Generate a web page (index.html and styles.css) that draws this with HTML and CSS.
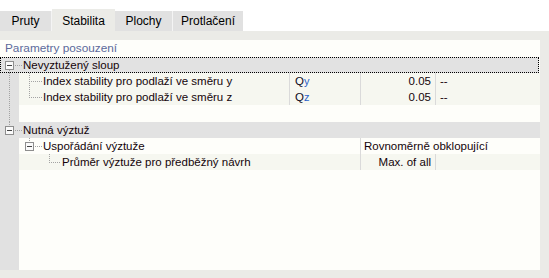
FILE: index.html
```html
<!DOCTYPE html>
<html>
<head>
<meta charset="utf-8">
<link rel="stylesheet" href="styles.css">
</head>
<body>
<div class="tabs">
  <div class="tab t1">Pruty</div>
  <div class="tab t2 active">Stabilita</div>
  <div class="tab t3">Plochy</div>
  <div class="tab t4">Protlačení</div>
</div>
<div class="panel">
  <div class="sheet">
    <div class="title">Parametry posouzení</div>
    <div class="tree">
      <div class="row cat focus">
        <span class="tw tw-first"><span class="exp"></span></span>
        <span class="label">Nevyztužený sloup</span>
      </div>
      <div class="row leaf">
        <span class="gut vl9"></span>
        <span class="cell name"><span class="ind ind-mid"></span><span class="label">Index stability pro podlaží ve směru y</span></span>
        <span class="cell sym">Q<sub>y</sub></span>
        <span class="cell val">0.05</span>
        <span class="cell unit">--</span>
      </div>
      <div class="row leaf">
        <span class="gut vl9"></span>
        <span class="cell name"><span class="ind ind-last"></span><span class="label">Index stability pro podlaží ve směru z</span></span>
        <span class="cell sym">Q<sub>z</sub></span>
        <span class="cell val">0.05</span>
        <span class="cell unit">--</span>
      </div>
      <div class="row blank">
        <span class="gut vl9"></span>
      </div>
      <div class="row cat">
        <span class="tw tw-last"><span class="exp"></span></span>
        <span class="label">Nutná výztuž</span>
      </div>
      <div class="row sub">
        <span class="gut"></span>
        <span class="cell name wide-name"><span class="ind2"><span class="exp"></span></span><span class="label">Uspořádání výztuže</span></span>
        <span class="cell wide">Rovnoměrně obklopující</span>
      </div>
      <div class="row leaf">
        <span class="gut"></span>
        <span class="cell name wide-name"><span class="ind3"></span><span class="label">Průměr výztuže pro předběžný návrh</span></span>
        <span class="cell val">Max. of all</span>
        <span class="cell unit"></span>
      </div>
    </div>
  </div>
</div>
</body>
</html>
```
FILE: styles.css
```css
* { box-sizing: border-box; }
html, body { margin: 0; padding: 0; }
body {
  width: 549px;
  height: 278px;
  background: #ffffff;
  font-family: "Liberation Sans", Arial, sans-serif;
  font-size: 11.5px;
  color: #14040a;
  overflow: hidden;
  display: flex;
  flex-direction: column;
}
.tabs {
  height: 31px;
  display: flex;
  align-items: flex-end;
}
.tab {
  height: 20px;
  line-height: 20px;
  background: #e1e1e1;
  color: #000;
  font-size: 12px;
  text-align: center;
  border-right: 1px solid #f4f4f4;
}
.tab.active {
  height: 22px;
  line-height: 24px;
  background: #ebebe7;
  border-right: none;
}
.t1 { width: 52px; }
.t2 { width: 63px; }
.t3 { width: 58px; }
.t4 { width: 70px; border-right: none; }

.panel {
  flex: 1;
  background: #ebebe7;
  padding: 9px 9px 8px 0;
  display: flex;
}
.sheet {
  flex: 1;
  background: #fefefa;
  display: flex;
  flex-direction: column;
}
.title {
  height: 17px;
  line-height: 17px;
  padding-left: 5px;
  font-size: 11.8px;
  color: #5c6a9c;
}
.tree {
  flex: 1;
  background: linear-gradient(to right, #e1e1e1 0 19px, #fefefa 19px);
}
.row {
  height: 16px;
  line-height: 16px;
  display: flex;
  white-space: nowrap;
}
.row.blank { height: 17px; }
.row.cat { background: #e2e2e2; }
.row.focus { outline: 1px dotted #000; outline-offset: -1px; width: 539px; }
.row.leaf .cell { background: #f6f7f0; }
.row.sub .cell { background: #fefefa; }

.gut { width: 19px; flex: none; }
.vl9 {
  background: repeating-linear-gradient(to bottom, #a3a3a3 0 1px, transparent 1px 2px) 9px 0 / 1px 100% no-repeat;
}

.tw {
  width: 23px;
  flex: none;
  display: flex;
  align-items: center;
  padding-left: 5px;
}
.tw-first {
  background:
    repeating-linear-gradient(to right, #a3a3a3 0 1px, transparent 1px 2px) 15px 8px / 7px 1px no-repeat,
    repeating-linear-gradient(to bottom, #a3a3a3 0 1px, transparent 1px 2px) 9px 13px / 1px 3px no-repeat;
}
.tw-last {
  background:
    repeating-linear-gradient(to right, #a3a3a3 0 1px, transparent 1px 2px) 15px 8px / 7px 1px no-repeat,
    repeating-linear-gradient(to bottom, #a3a3a3 0 1px, transparent 1px 2px) 9px 0 / 1px 4px no-repeat;
}
.exp {
  width: 9px;
  height: 9px;
  border: 1px solid #8e8e8e;
  background: #fafafa linear-gradient(#444, #444) 1px 3px / 5px 1px no-repeat;
  flex: none;
}

.cell { height: 16px; display: flex; align-items: center; }
.name { width: 270px; flex: none; }
.name.wide-name { width: 341px; }
.sym { width: 71px; flex: none; border-left: 1px solid #dadada; padding-left: 5px; color: #0c0c1c; }
.sym sub { font-size: 11px; vertical-align: -2px; line-height: 0; color: #2a62c8; }
.val { width: 75px; flex: none; border-left: 1px solid #dadada; justify-content: flex-end; padding-right: 4px; }
.unit { width: 105px; flex: none; border-left: 1px solid #dadada; padding-left: 4px; }
.wide { width: 180px; flex: none; border-left: 1px solid #dadada; padding-left: 3px; }

.ind { width: 24px; height: 16px; flex: none; }
.ind-mid {
  background:
    repeating-linear-gradient(to right, #a3a3a3 0 1px, transparent 1px 2px) 10px 8px / 13px 1px no-repeat,
    repeating-linear-gradient(to bottom, #a3a3a3 0 1px, transparent 1px 2px) 10px 0 / 1px 16px no-repeat;
}
.ind-last {
  background:
    repeating-linear-gradient(to right, #a3a3a3 0 1px, transparent 1px 2px) 10px 8px / 13px 1px no-repeat,
    repeating-linear-gradient(to bottom, #a3a3a3 0 1px, transparent 1px 2px) 10px 0 / 1px 9px no-repeat;
}
.ind2 {
  width: 24px;
  height: 16px;
  flex: none;
  display: flex;
  align-items: center;
  padding-left: 6px;
  background:
    repeating-linear-gradient(to right, #a3a3a3 0 1px, transparent 1px 2px) 16px 8px / 7px 1px no-repeat,
    repeating-linear-gradient(to bottom, #a3a3a3 0 1px, transparent 1px 2px) 10px 0 / 1px 4px no-repeat;
}
.ind3 {
  width: 43px;
  height: 16px;
  flex: none;
  background:
    repeating-linear-gradient(to right, #a3a3a3 0 1px, transparent 1px 2px) 30px 8px / 12px 1px no-repeat,
    repeating-linear-gradient(to bottom, #a3a3a3 0 1px, transparent 1px 2px) 30px 0 / 1px 9px no-repeat;
}
.label { color: #14040a; }
```
